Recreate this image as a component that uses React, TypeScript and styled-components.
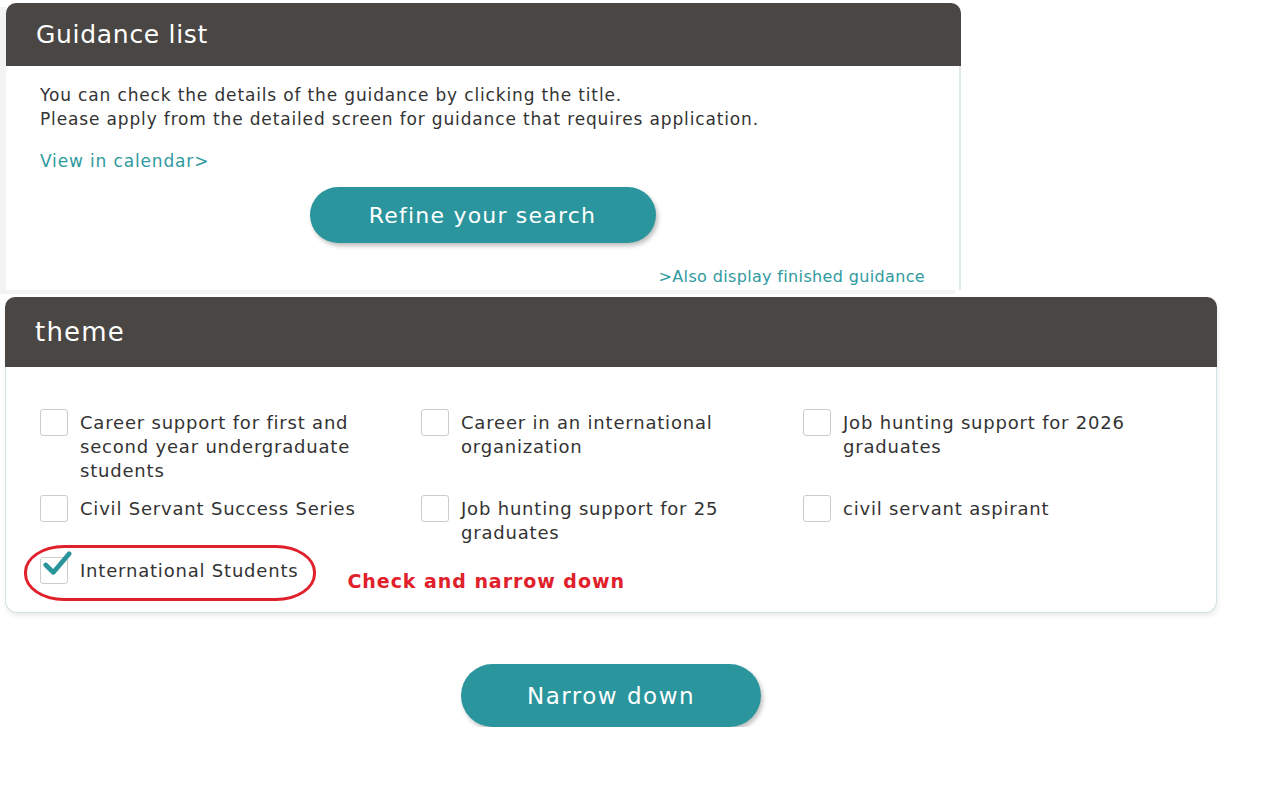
import React from 'react'
import styled, { createGlobalStyle } from 'styled-components'

const GlobalStyle = createGlobalStyle`
  body {
    margin: 0;
    background: #ffffff;
    font-family: "DejaVu Sans", "Noto Sans", sans-serif;
    color: #333333;
  }
`

const themes = [
  'Career support for first and second year undergraduate students',
  'Career in an international organization',
  'Job hunting support for 2026 graduates',
  'Civil Servant Success Series',
  'Job hunting support for 25 graduates',
  'civil servant aspirant',
]

const App = () => {
  return (
    <Page>
      <GlobalStyle />
      <GuidanceCard>
        <PanelHeader size={25} height={63} spacing={0.7}>Guidance list</PanelHeader>
        <GuidanceBody>
          <Intro>
            You can check the details of the guidance by clicking the title.
            <br />
            Please apply from the detailed screen for guidance that requires application.
          </Intro>
          <CalendarLink href="#">View in calendar&gt;</CalendarLink>
          <ButtonRow>
            <PillButton width={346} height={56} size={22} spacing={1.2}>Refine your search</PillButton>
          </ButtonRow>
          <FinishedLink href="#">&gt;Also display finished guidance</FinishedLink>
        </GuidanceBody>
      </GuidanceCard>

      <ThemeCard>
        <PanelHeader size={26} height={70} spacing={1.2}>theme</PanelHeader>
        <ThemeBody>
          <ThemeGrid>
            {themes.map((label) => (
              <ThemeItem key={label}>
                <Box />
                <Label>{label}</Label>
              </ThemeItem>
            ))}
            <LastRow>
              <ThemeItem>
                <Box>
                  <Check viewBox="0 0 32 30">
                    <path d="M4 15 L12 23 L29 3" fill="none" stroke="#2a949b" strokeWidth="5" strokeLinecap="round" strokeLinejoin="round" />
                  </Check>
                </Box>
                <Label>International Students</Label>
                <Circle />
              </ThemeItem>
              <Note>Check and narrow down</Note>
            </LastRow>
          </ThemeGrid>
        </ThemeBody>
      </ThemeCard>

      <BottomRow>
        <PillButton width={300} height={63} size={23} spacing={1.5}>Narrow down</PillButton>
      </BottomRow>
    </Page>
  )
}

export default App

const Page = styled.div`
  width: 1273px;
  padding-top: 3px;
`

const GuidanceCard = styled.section`
  margin-left: 6px;
  width: 955px;
  box-shadow: -6px 4px 0 0 #f3f3f3;
`

const PanelHeader = styled.h2<{ size: number; height: number; spacing: number }>`
  margin: 0;
  height: ${p => p.height}px;
  display: flex;
  align-items: center;
  padding-left: 30px;
  background: #4a4643;
  color: #ffffff;
  font-weight: 400;
  font-size: ${p => p.size}px;
  letter-spacing: ${p => p.spacing}px;
  border-radius: 10px 10px 0 0;
`

const GuidanceBody = styled.div`
  height: 224px;
  box-sizing: border-box;
  padding: 17px 34px 0 34px;
  border-right: 2px solid #dde9eb;
  background: #ffffff;
  display: flex;
  flex-direction: column;
`

const Intro = styled.p`
  margin: 0;
  font-size: 17px;
  line-height: 24px;
  letter-spacing: 0.85px;
  color: #333333;
`

const CalendarLink = styled.a`
  margin-top: 18px;
  font-size: 17px;
  line-height: 24px;
  letter-spacing: 0.85px;
  color: #2f9aa0;
  text-decoration: none;
  align-self: flex-start;
`

const ButtonRow = styled.div`
  margin-top: 14px;
  display: flex;
  justify-content: center;
`

const PillButton = styled.button<{ width: number; height: number; size: number; spacing: number }>`
  width: ${p => p.width}px;
  height: ${p => p.height}px;
  border: none;
  border-radius: ${p => p.height / 2}px;
  background: #2a959d;
  color: #ffffff;
  font-family: inherit;
  font-size: ${p => p.size}px;
  letter-spacing: ${p => p.spacing}px;
  box-shadow: 2px 3px 4px rgba(0, 0, 0, 0.25);
  cursor: pointer;
`

const FinishedLink = styled.a`
  margin-top: 24px;
  align-self: flex-end;
  font-size: 16px;
  line-height: 20px;
  letter-spacing: 0.35px;
  color: #2f9aa0;
  text-decoration: none;
`

const ThemeCard = styled.section`
  margin-top: 7px;
  margin-left: 5px;
  width: 1212px;
  border-radius: 10px 10px 12px 12px;
  box-shadow: 1px 3px 4px rgba(0, 0, 0, 0.08);
`

const ThemeBody = styled.div`
  box-sizing: border-box;
  height: 246px;
  padding: 42px 20px 0 34px;
  border: 1px solid #cfe2e5;
  border-top: none;
  border-radius: 0 0 12px 12px;
  background: #ffffff;
`

const ThemeGrid = styled.div`
  display: grid;
  grid-template-columns: 381px 382px 1fr;
  row-gap: 12px;
`

const ThemeItem = styled.label`
  position: relative;
  display: flex;
  align-items: flex-start;
  gap: 12px;
  cursor: pointer;
`

const Box = styled.span`
  position: relative;
  flex: none;
  width: 26px;
  height: 25px;
  border: 1.5px solid #cccccc;
  border-radius: 3px;
  background: #ffffff;
`

const Check = styled.svg`
  position: absolute;
  left: 1px;
  top: -7px;
  width: 30px;
  height: 28px;
`

const Label = styled.span`
  padding-top: 2px;
  font-size: 18px;
  line-height: 24px;
  letter-spacing: 0.8px;
  color: #333333;
  max-width: 300px;
`

const LastRow = styled.div`
  grid-column: 1 / -1;
  display: flex;
  align-items: flex-start;
`

const Circle = styled.span`
  position: absolute;
  left: -16px;
  top: -12px;
  width: 286px;
  height: 50px;
  border: 3px solid #e0202a;
  border-radius: 40px / 27px;
  pointer-events: none;
`

const Note = styled.span`
  margin-left: 49px;
  margin-top: 12px;
  font-size: 19px;
  line-height: 24px;
  font-weight: 700;
  letter-spacing: 0.95px;
  color: #e0202a;
`

const BottomRow = styled.div`
  width: 1222px;
  margin-top: 51px;
  display: flex;
  justify-content: center;
`
